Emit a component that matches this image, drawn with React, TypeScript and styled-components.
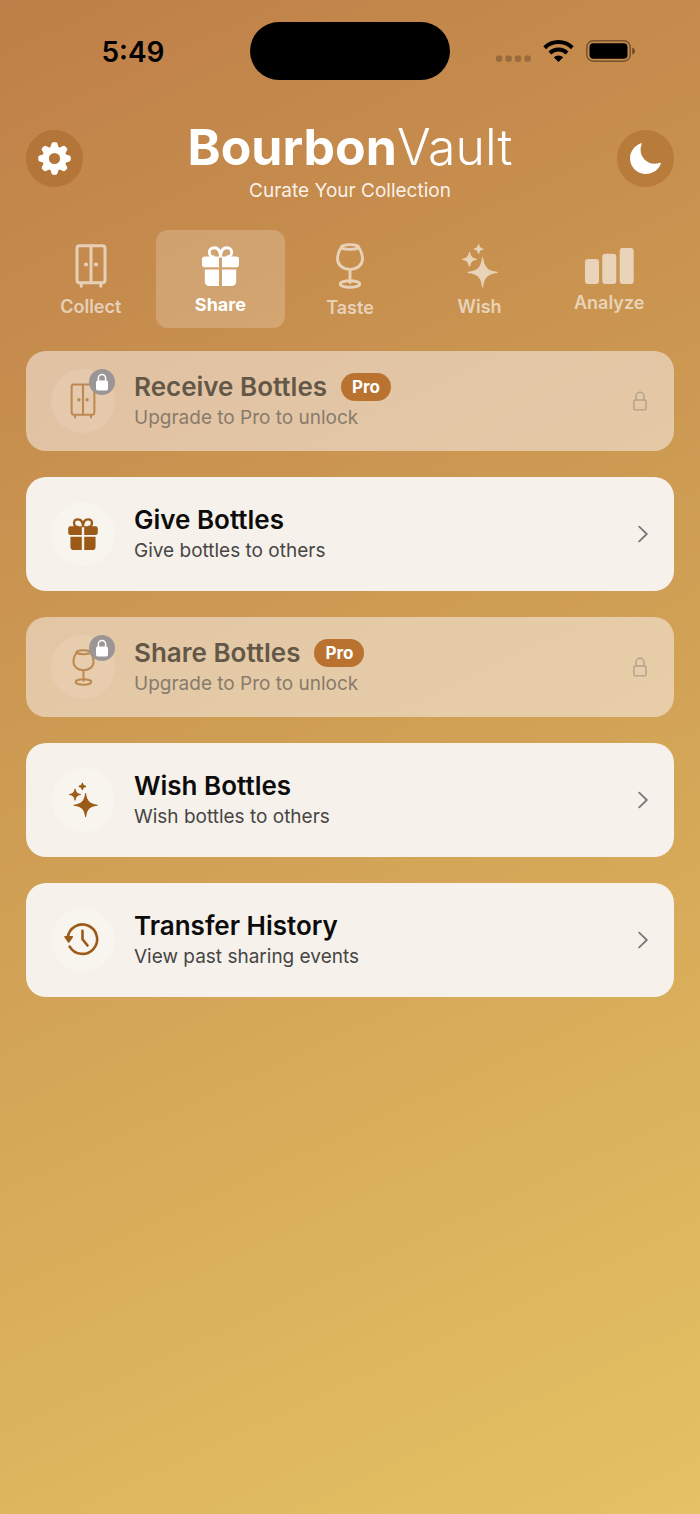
import React from 'react';
import styled, { createGlobalStyle } from 'styled-components';

const GlobalStyle = createGlobalStyle`
  * { box-sizing: border-box; }
  body { margin: 0; }
  button {
    font: inherit;
    color: inherit;
    border: 0;
    padding: 0;
    background: none;
    cursor: pointer;
  }
  svg { display: block; flex: none; }
`;

/* ---------- Icons ---------- */

type IconProps = { scale?: number; stroke?: number };

const size = (w: number, h: number, scale = 1) => ({
  width: Math.round(w * scale),
  height: Math.round(h * scale),
  viewBox: `0 0 ${w} ${h}`,
  'aria-hidden': true,
});

const GearIcon = () => (
  <svg {...size(33, 33)} fill="currentColor">
    {[0, 45, 90, 135, 180, 225, 270, 315].map((a) => (
      <path
        key={a}
        d="M12 6.500 L13.600 1.600 Q14 .3 15.200 .3 H17.800 Q19 .3 19.400 1.600 L21 6.500 Z"
        transform={`rotate(${a} 16.5 16.5)`}
      />
    ))}
    <circle cx="16.5" cy="16.5" r="8.8" fill="none" stroke="currentColor" strokeWidth="6.400" />
  </svg>
);

const MoonIcon = () => (
  <svg {...size(31, 31)} fill="currentColor">
    <path d="M11 .3C4.5 2.700 0 8.700 0 15.200 0 23.900 7 31 15.700 31c6.800 0 12.800-4.300 15.100-10.300.3-.8-.3-1.200-1.100-.9-1.800.7-3.400.9-5 .9C17 20.700 10.600 14.200 10.600 6.900c0-2.200.4-4 1.100-5.600.4-.9.1-1.400-.7-1Z" />
  </svg>
);

const CabinetIcon = ({ scale, stroke = 3 }: IconProps) => (
  <svg {...size(32, 44, scale)} fill="none" stroke="currentColor" strokeWidth={stroke} strokeLinecap="round">
    <rect x="2" y="1.8" width="28" height="37" rx="2.6" />
    <path d="M16 2v36.5M6.2 39.5v2.7M25.8 39.5v2.7" />
    <circle cx="11" cy="20.5" r="2.1" fill="currentColor" stroke="none" />
    <circle cx="21" cy="20.5" r="2.1" fill="currentColor" stroke="none" />
  </svg>
);

const GiftIcon = ({ scale }: IconProps) => (
  <svg {...size(37, 40, scale)} fill="currentColor">
    <path
      d="M18.5 11.5C18.5 5 16.2 1.7 12.2 1.7c-3 0-4.9 2-4.9 4.5 0 2.9 2.2 5 5.4 5M18.5 11.5c0-6.5 2.3-9.8 6.3-9.8 3 0 4.9 2 4.9 4.5 0 2.9-2.2 5-5.4 5"
      fill="none"
      stroke="currentColor"
      strokeWidth="2.9"
    />
    <path d="M17 10.4v10.8H2.8A2.8 2.8 0 0 1 0 18.4v-5.2a2.8 2.8 0 0 1 2.8-2.8ZM20 10.4v10.8h14.2a2.8 2.8 0 0 0 2.8-2.8v-5.2a2.8 2.8 0 0 0-2.8-2.8Z" />
    <path d="M17 23.4V40H7a4.2 4.2 0 0 1-4.2-4.2V23.4ZM20 23.4V40h10a4.2 4.2 0 0 0 4.2-4.2V23.4Z" />
  </svg>
);

const GlassIcon = ({ scale, stroke = 2.9 }: IconProps) => (
  <svg {...size(28, 46, scale)} fill="none" stroke="currentColor" strokeWidth={stroke} strokeLinecap="round">
    <ellipse cx="14" cy="4" rx="8.6" ry="2.4" />
    <path d="M5.500 4C3 7.500 1.500 11.500 1.500 16c0 6 5.500 10.400 12.500 10.400S26.500 22 26.500 16c0-4.500-1.500-8.500-4-12" />
    <path d="M14 27v12.500" />
    <ellipse cx="14" cy="41" rx="9.700" ry="3.300" />
  </svg>
);

/* Four-pointed star with concave sides, centred on (x, y) */
const star = (x: number, y: number, r: number) => {
  const a = r * 0.07;
  const b = r * 0.34;
  return [
    `M${x} ${y - r}`,
    `C${x + a} ${y - b} ${x + b} ${y - a} ${x + r} ${y}`,
    `C${x + b} ${y + a} ${x + a} ${y + b} ${x} ${y + r}`,
    `C${x - a} ${y + b} ${x - b} ${y + a} ${x - r} ${y}`,
    `C${x - b} ${y - a} ${x - a} ${y - b} ${x} ${y - r}Z`,
  ].join('');
};

const SparklesIcon = ({ scale }: IconProps) => (
  <svg {...size(36, 44, scale)} fill="currentColor" stroke="currentColor" strokeWidth="1.3" strokeLinejoin="round">
    <path d={star(20.6, 28.4, 14.4)} />
    <path d={star(7.5, 15.3, 6.8)} />
    <path d={star(16.6, 5.1, 4.2)} />
  </svg>
);

const BarsIcon = () => (
  <svg {...size(49, 36)} fill="currentColor">
    <rect x="0" y="11" width="14" height="25" rx="3" />
    <rect x="17.300" y="5.700" width="14" height="30.300" rx="3" />
    <rect x="34.700" y="0" width="14" height="36" rx="3" />
  </svg>
);

const HistoryIcon = () => (
  <svg {...size(38, 34)} fill="none" stroke="currentColor" strokeWidth="2.600" strokeLinecap="round" strokeLinejoin="round">
    <path d="M3.800 14.500A14.700 14.700 0 1 1 5.700 23.600" />
    <path d="M18.500 7.700v8.500l5 6.300" />
    <path d="M1 13.800h7.300L4.700 19Z" fill="currentColor" strokeWidth="1.600" />
  </svg>
);

const LockFillIcon = () => (
  <svg {...size(12, 18)}>
    <rect x="0" y="7.500" width="12" height="10" rx="1.700" fill="currentColor" />
    <path d="M2.400 8.500V5a3.600 3.600 0 0 1 7.200 0v3.500" fill="none" stroke="currentColor" strokeWidth="1.500" />
  </svg>
);

const LockIcon = () => (
  <svg {...size(14, 20)} fill="none" stroke="currentColor" strokeWidth="1.400">
    <rect x=".9" y="9" width="12.200" height="9.900" rx="1.600" />
    <path d="M3 9V5.200a4 4 0 0 1 8 0V9" />
  </svg>
);

const ChevronIcon = () => (
  <svg {...size(10, 18)} fill="none" stroke="currentColor" strokeWidth="1.800" strokeLinecap="round" strokeLinejoin="round">
    <path d="M1.200 1.600 8.800 9l-7.600 7.400" />
  </svg>
);

const CellularDots = () => (
  <svg {...size(35, 22)} fill="#000" opacity=".22">
    {[0, 9.500, 19, 28.500].map((x) => (
      <rect key={x} x={x} y="15.500" width="6.200" height="6.200" rx="2" />
    ))}
  </svg>
);

const WifiIcon = () => (
  <svg {...size(31, 22)} fill="none" stroke="#000" strokeWidth="4">
    <path d="M1.700 7.700a19.800 19.800 0 0 1 27.600 0" />
    <path d="M6.900 13a12.400 12.400 0 0 1 17.200 0" />
    <path d="M10.800 17.300a6.800 6.800 0 0 1 9.400 0L15.500 22Z" fill="#000" stroke="none" />
  </svg>
);

const BatteryIcon = () => (
  <svg {...size(50, 22)}>
    <rect x=".8" y=".8" width="43.400" height="20.400" rx="6.400" fill="none" stroke="#000" strokeOpacity=".4" strokeWidth="1.500" />
    <rect x="3.500" y="3.300" width="38" height="15.400" rx="4" />
    <path d="M46.200 7.400c1.700.6 2.800 2 2.800 3.600s-1.100 3-2.800 3.600Z" opacity=".45" />
  </svg>
);

/* ---------- Layout ---------- */

const Page = styled.div`
  min-height: 100vh;
  background: linear-gradient(155deg, #bf7f48 0%, #d0a055 50%, #e5c263 100%);
  color: #fff;
  font-family: Inter, 'Liberation Sans', sans-serif;
`;

const StatusBar = styled.div`
  display: grid;
  grid-template-columns: 1fr 200px 1fr;
  align-items: center;
  padding-top: 22px;
  color: #000;
`;

const Time = styled.time`
  padding: 2px 0 0 16px;
  font-size: 28px;
  line-height: 34px;
  font-weight: 600;
  text-align: center;
`;

const Island = styled.div`
  height: 58px;
  border-radius: 29px;
  background: #000;
`;

const StatusIcons = styled.div`
  display: flex;
  justify-content: center;
  gap: 12px;
  padding-right: 18px;
`;

const Header = styled.header`
  display: flex;
  align-items: center;
  justify-content: space-between;
  padding: 33px 26px 27px;
`;

const RoundButton = styled.button`
  display: grid;
  place-items: center;
  width: 57px;
  height: 57px;
  border-radius: 50%;
  background: rgba(160, 92, 30, 0.4);
`;

const Brand = styled.div`
  display: flex;
  flex-direction: column;
  gap: 3px;
  padding-top: 6px;
  text-align: center;
`;

const Title = styled.h1`
  margin: 0;
  font-size: 50px;
  line-height: 57px;
  font-weight: 700;
`;

const TitleLight = styled.span`
  font-weight: 300;
`;

const Tagline = styled.p`
  margin: 0;
  font-size: 19px;
  line-height: 24px;
  color: rgba(255, 255, 255, 0.9);
`;

const Tabs = styled.nav`
  display: grid;
  grid-template-columns: repeat(5, 1fr);
  padding: 0 26px;
`;

const Tab = styled.button<{ $active?: boolean }>`
  display: flex;
  flex-direction: column;
  align-items: center;
  justify-content: center;
  gap: 10px;
  height: 98px;
  padding-top: 2px;
  border-radius: 12px;
  font-size: 18px;
  line-height: 18px;
  font-weight: ${(p) => (p.$active ? 700 : 600)};
  color: ${(p) => (p.$active ? '#fff' : 'rgba(255, 255, 255, 0.6)')};
  background: ${(p) => (p.$active ? 'rgba(255, 255, 255, 0.2)' : 'none')};
`;

const TabIcon = styled.span<{ $dim?: boolean }>`
  color: #fff;
  opacity: ${(p) => (p.$dim ? 0.6 : 1)};
`;

const Cards = styled.main`
  display: flex;
  flex-direction: column;
  gap: 26px;
  padding: 23px 26px 40px;
`;

const Card = styled.button<{ $locked?: boolean }>`
  display: flex;
  align-items: center;
  gap: 19px;
  width: 100%;
  padding: ${(p) => (p.$locked ? '18px 27px 18px 25px' : '25px 26px 25px 25px')};
  border-radius: 20px;
  text-align: left;
  color: ${(p) => (p.$locked ? '#635748' : '#0c0c0c')};
  background: ${(p) => (p.$locked ? 'rgba(252, 248, 250, 0.5)' : '#f6f1eb')};
`;

const IconDisc = styled.span<{ $locked?: boolean }>`
  position: relative;
  display: grid;
  place-items: center;
  flex: none;
  width: 64px;
  height: 64px;
  border-radius: 50%;
  color: ${(p) => (p.$locked ? '#bd8951' : '#9c5a19')};
  background: ${(p) => (p.$locked ? 'rgba(255, 240, 225, 0.14)' : '#f8f4ee')};
`;

const LockBadge = styled.span`
  position: absolute;
  top: 0;
  right: 0;
  display: grid;
  place-items: center;
  width: 26px;
  height: 26px;
  border-radius: 50%;
  color: #fff;
  background: #9b9695;
`;

const CardText = styled.span`
  display: flex;
  flex-direction: column;
  flex: 1;
  min-width: 0;
`;

const CardTitle = styled.span`
  display: flex;
  align-items: center;
  gap: 14px;
  font-size: 26px;
  line-height: 34px;
  font-weight: 600;
`;

const ProPill = styled.span`
  padding: 0 11px;
  border-radius: 14px;
  font-size: 17px;
  line-height: 28px;
  font-weight: 700;
  color: #fff;
  background: #b97230;
`;

const CardSubtitle = styled.span<{ $locked?: boolean }>`
  font-size: 19px;
  line-height: 28px;
  color: ${(p) => (p.$locked ? '#877b6c' : '#474645')};
`;

const Accessory = styled.span<{ $locked?: boolean }>`
  color: ${(p) => (p.$locked ? '#b0a08c' : '#7b7977')};
`;

const tabs = [
  { label: 'Collect', icon: <CabinetIcon /> },
  { label: 'Share', icon: <GiftIcon />, active: true },
  { label: 'Taste', icon: <GlassIcon /> },
  { label: 'Wish', icon: <SparklesIcon /> },
  { label: 'Analyze', icon: <BarsIcon /> },
];

const cards = [
  { title: 'Receive Bottles', subtitle: 'Upgrade to Pro to unlock', icon: <CabinetIcon scale={0.81} stroke={2.5} />, locked: true },
  { title: 'Give Bottles', subtitle: 'Give bottles to others', icon: <GiftIcon scale={0.81} /> },
  { title: 'Share Bottles', subtitle: 'Upgrade to Pro to unlock', icon: <GlassIcon scale={0.81} stroke={2.5} />, locked: true },
  { title: 'Wish Bottles', subtitle: 'Wish bottles to others', icon: <SparklesIcon scale={0.81} /> },
  { title: 'Transfer History', subtitle: 'View past sharing events', icon: <HistoryIcon /> },
];

export default function App() {
  return (
    <Page>
      <GlobalStyle />
      <StatusBar>
        <Time>5:49</Time>
        <Island />
        <StatusIcons>
          <CellularDots />
          <WifiIcon />
          <BatteryIcon />
        </StatusIcons>
      </StatusBar>
      <Header>
        <RoundButton aria-label="Settings">
          <GearIcon />
        </RoundButton>
        <Brand>
          <Title>
            Bourbon<TitleLight>Vault</TitleLight>
          </Title>
          <Tagline>Curate Your Collection</Tagline>
        </Brand>
        <RoundButton aria-label="Dark mode">
          <MoonIcon />
        </RoundButton>
      </Header>
      <Tabs>
        {tabs.map((t) => (
          <Tab key={t.label} $active={t.active} aria-current={t.active ? 'page' : undefined}>
            <TabIcon $dim={!t.active}>{t.icon}</TabIcon>
            {t.label}
          </Tab>
        ))}
      </Tabs>
      <Cards>
        {cards.map((c) => (
          <Card key={c.title} $locked={c.locked}>
            <IconDisc $locked={c.locked}>
              {c.icon}
              {c.locked && (
                <LockBadge>
                  <LockFillIcon />
                </LockBadge>
              )}
            </IconDisc>
            <CardText>
              <CardTitle>
                {c.title}
                {c.locked && <ProPill>Pro</ProPill>}
              </CardTitle>
              <CardSubtitle $locked={c.locked}>{c.subtitle}</CardSubtitle>
            </CardText>
            <Accessory $locked={c.locked}>{c.locked ? <LockIcon /> : <ChevronIcon />}</Accessory>
          </Card>
        ))}
      </Cards>
    </Page>
  );
}
